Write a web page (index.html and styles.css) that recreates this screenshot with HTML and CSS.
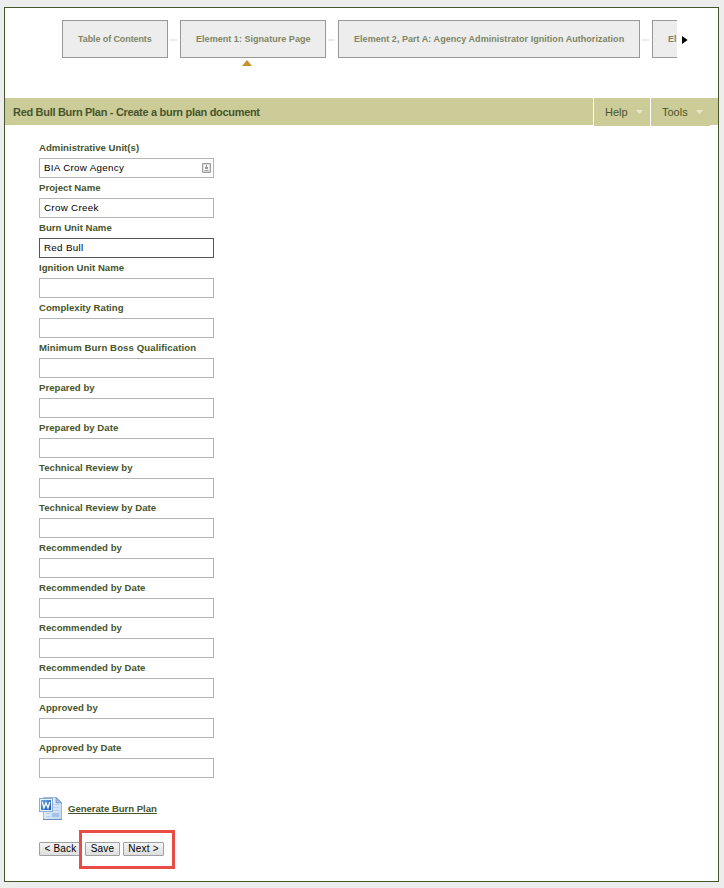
FILE: index.html
```html
<!DOCTYPE html>
<html lang="en">
<head>
<meta charset="utf-8">
<title>Red Bull Burn Plan</title>
<link rel="stylesheet" href="styles.css">
</head>
<body>
<div class="frame">
  <nav class="wizard">
    <div class="steps">
      <div class="step step-toc"><span>Table of Contents</span></div>
      <i class="dash"></i>
      <div class="step step-one current"><span>Element 1: Signature Page</span></div>
      <i class="dash"></i>
      <div class="step step-two"><span>Element 2, Part A: Agency Administrator Ignition Authorization</span></div>
      <i class="dash"></i>
      <div class="step step-cut"><span>El</span></div>
    </div>
    <svg class="scroll" width="6" height="8" viewBox="0 0 6 8"><path d="M0 0L5.6 4L0 8Z" fill="#000"/></svg>
  </nav>
  <header class="bar">
    <h1>Red Bull Burn Plan - Create a burn plan document</h1>
    <div class="menu help"><span>Help</span><svg width="7" height="4" viewBox="0 0 7 4"><path d="M0 0H7L3.5 4Z" fill="#e6e6c9"/></svg></div>
    <div class="menu tools"><span>Tools</span><svg width="7" height="4" viewBox="0 0 7 4"><path d="M0 0H7L3.5 4Z" fill="#e6e6c9"/></svg></div>
  </header>
  <form class="form">
    <label>Administrative Unit(s)</label>
    <div class="input"><span>BIA Crow Agency</span>
      <svg class="card" width="9" height="10" viewBox="0 0 9 10"><rect x=".6" y=".6" width="7.8" height="8.8" rx=".6" fill="#f4f4f4" stroke="#999" stroke-width="1.2"/><path d="M4 2h1v2h1v2H3V4h1zM2.5 7h4v1h-4z" fill="#999"/></svg>
    </div>
    <label>Project Name</label><div class="input"><span>Crow Creek</span></div>
    <label>Burn Unit Name</label><div class="input focused"><span>Red Bull</span></div>
    <label>Ignition Unit Name</label><div class="input"></div>
    <label>Complexity Rating</label><div class="input"></div>
    <label class="wide">Minimum Burn Boss Qualification</label><div class="input"></div>
    <label>Prepared by</label><div class="input"></div>
    <label>Prepared by Date</label><div class="input"></div>
    <label>Technical Review by</label><div class="input"></div>
    <label>Technical Review by Date</label><div class="input"></div>
    <label>Recommended by</label><div class="input"></div>
    <label>Recommended by Date</label><div class="input"></div>
    <label>Recommended by</label><div class="input"></div>
    <label>Recommended by Date</label><div class="input"></div>
    <label>Approved by</label><div class="input"></div>
    <label>Approved by Date</label><div class="input"></div>
    <div class="generate">
      <svg width="24" height="24" viewBox="0 0 24 24">
        <defs>
          <linearGradient id="page" x1="0" y1="0" x2="1" y2="1"><stop offset="0" stop-color="#f4f9fe"/><stop offset="1" stop-color="#bcd5f1"/></linearGradient>
          <linearGradient id="tile" x1="0" y1="0" x2="1" y2="1"><stop offset="0" stop-color="#6aa9e6"/><stop offset="1" stop-color="#1c55a8"/></linearGradient>
        </defs>
        <path d="M4.5.5h13l5 5v17h-18z" fill="url(#page)" stroke="#a0b9da"/>
        <path d="M4 22.5h19" stroke="#6f8db8"/>
        <path d="M17 .8v5h5.5z" fill="#9fc0e8" stroke="#6288bd" stroke-width=".7"/>
        <path d="M14 7.5h6M14 10.5h6M14 13.5h6M7 16.5h5M7 19.5h5" stroke="#b9d1ee"/>
        <path d="M13 16h7v4h-7z" fill="#a3c3ea"/>
        <rect x=".5" y="1.5" width="13" height="13" fill="#e9f3fd" stroke="#88abd8"/>
        <rect x="2" y="3" width="10" height="10" fill="url(#tile)"/>
        <path d="M3.2 5l1.8 5.8L7 6l2 4.8L10.8 5" fill="none" stroke="#fff" stroke-width="1.3"/>
      </svg>
      <a>Generate Burn Plan</a>
    </div>
    <div class="buttons">
      <button type="button" class="back">&lt; Back</button>
      <button type="button" class="save">Save</button>
      <button type="button" class="next">Next &gt;</button>
      <div class="highlight"></div>
    </div>
  </form>
</div>
</body>
</html>
```
FILE: styles.css
```css
* { box-sizing: border-box; }
body {
  margin: 0;
  padding: 7px 0 0 4px;
  height: 888px;
  overflow: hidden;
  background: #ededed;
  font-family: "Liberation Sans", Arial, sans-serif;
  color: #46552b;
}
.frame {
  width: 715px;
  height: 875px;
  border: 1px solid #46552b;
  background: #fff;
}
.wizard { display: flex; height: 90px; padding: 12px 0 0 57px; }
.steps { display: flex; width: 615px; height: 50px; }
.step {
  position: relative;
  flex: none;
  height: 38px;
  padding-left: 15px;
  border: 1px solid #999;
  background: #ededed;
  color: #7d8564;
  font-size: 9px;
  font-weight: bold;
  letter-spacing: 0.04px;
  line-height: 36px;
  white-space: nowrap;
}
.step-toc { width: 106px; letter-spacing: -0.1px; }
.step-one { width: 146px; }
.step-two { width: 302px; }
.step-cut { width: 25px; border-right: 0; overflow: hidden; }
.current::after {
  content: "";
  position: absolute;
  left: 61px;
  top: 39px;
  border: solid transparent;
  border-width: 0 5.5px 6px;
  border-bottom-color: #c8922e;
}
.dash { flex: none; width: 7px; height: 2px; margin: 19px 3px 0 2px; background: #ebebeb; }
.scroll { margin: 16px 0 0 5px; }
.bar { display: flex; height: 27px; background: #cccc99; }
h1 {
  width: 588px;
  margin: 0;
  padding-left: 8px;
  font-size: 11px;
  letter-spacing: -0.31px;
  line-height: 28px;
  white-space: nowrap;
}
.menu {
  display: flex;
  justify-content: space-between;
  height: 28px;
  border-left: 1px solid #fff;
  background: #cccc99;
  font-size: 11px;
  line-height: 28px;
}
.menu svg { margin-top: 12px; }
.help { width: 57px; padding: 0 7px 0 11px; }
.tools { width: 60px; padding: 0 7px 0 11px; }
.form { padding: 13px 0 0 34px; }
label { display: block; height: 20px; font-size: 9.6px; font-weight: bold; letter-spacing: 0.02px; line-height: 19px; white-space: nowrap; }
.wide { letter-spacing: 0.1px; }
.input {
  display: flex;
  justify-content: space-between;
  width: 175px;
  height: 20px;
  padding: 0 2px 0 4px;
  border: 1px solid #b5b5b5;
  color: #000;
  font-size: 9.8px;
  letter-spacing: 0.3px;
  line-height: 18px;
}
.focused { border-color: #555; }
.card { margin-top: 4px; }
.generate { display: flex; gap: 5px; height: 24px; margin-top: 19px; }
.generate a { font-size: 9.6px; font-weight: bold; letter-spacing: -0.04px; line-height: 24px; text-decoration: underline; white-space: nowrap; }
.buttons { position: relative; display: flex; margin-top: 21px; }
button {
  height: 14px;
  margin: 0;
  padding: 0;
  border: 1px solid #a0a0a0;
  border-radius: 1px;
  background: linear-gradient(#f5f5f5, #dedede);
  color: #000;
  font: 10px/12px "Liberation Sans", Arial, sans-serif;
  letter-spacing: 0.2px;
  white-space: nowrap;
}
.back { width: 43px; margin-right: 3px; }
.save { width: 35px; margin-right: 3px; }
.next { width: 41px; }
.highlight { position: absolute; left: 40px; top: -12px; width: 96px; height: 39px; border: 3px solid #e84c45; }
```
